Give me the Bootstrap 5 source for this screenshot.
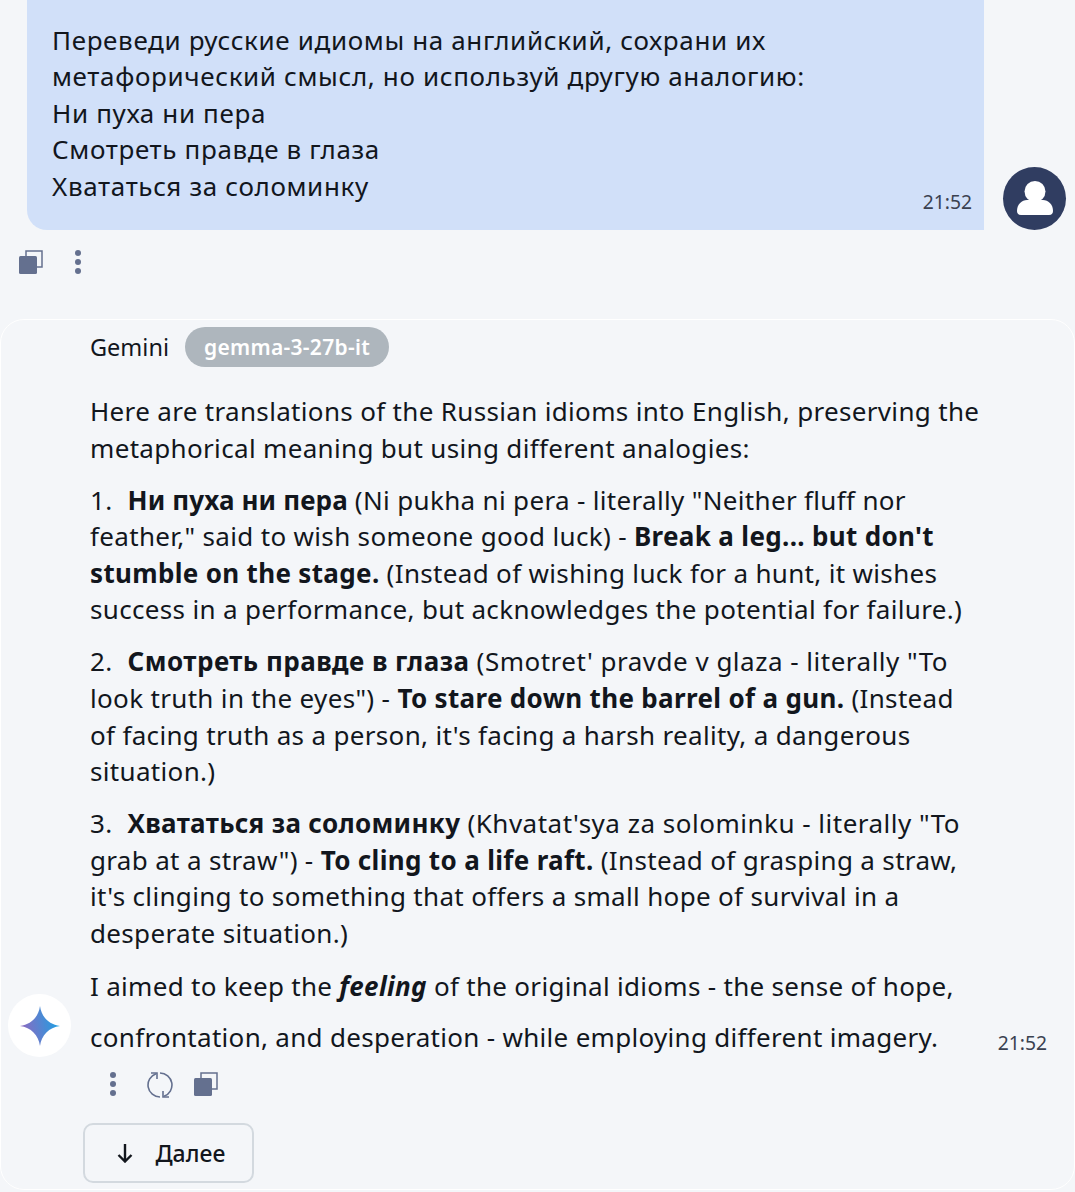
<!DOCTYPE html>
<html lang="ru">
<head>
<meta charset="UTF-8">
<title>Chat</title>
<link href="https://cdn.jsdelivr.net/npm/bootstrap@5.3.0/dist/css/bootstrap.min.css" rel="stylesheet">
<style>
html, body { height: 1192px; overflow: hidden; }
body { background: #f4f6f9; color: #12161d; font-family: "Noto Sans", "Liberation Sans", sans-serif; font-size: 26px; line-height: 36.6px; }
.user-row { height: 230px; padding-left: 27px; padding-right: 9px; }
.user-bubble { width: 957px; height: 230px; background: #d1e0f9; border-bottom-left-radius: 20px; padding: 21.7px 12px 0 25px; letter-spacing: .64px; }
.stamp { font-size: 19.3px; line-height: 24px; color: #3a4150; letter-spacing: 0; }
.user-avatar { width: 63px; height: 63px; border-radius: 50%; background: #303d61; margin-top: 167px; }
.tool-row { height: 89px; padding: 20px 0 0 19px; gap: 30px; }
.answer-card { height: 871px; border: 1px solid #fff; border-radius: 24px; padding: 7px 0 0 89px; position: relative; }
.head-row { height: 40px; gap: 16px; margin-bottom: 26px; font-size: 23.5px; }
.model-pill { background: #aeb6bd; color: #fff; border-radius: 20px; height: 40px; padding: 0 19px; font-size: 21px; font-weight: 600; letter-spacing: .3px; }
.answer-text { width: 940px; letter-spacing: .33px; }
.answer-text p { margin-bottom: 15.4px; }
.answer-text p:last-child { margin-bottom: 0; }
.num { margin-right: 8px; }
.tight-bold { letter-spacing: .13px; }
.wide-bold { letter-spacing: .45px; }
.wide-line { letter-spacing: .5px; }
.closing { line-height: 51px; margin-top: 9.4px; width: 900px; letter-spacing: .3px; }
.side-stamp { position: absolute; right: 27px; bottom: 134px; }
.gem-avatar { position: absolute; left: 7px; top: 674px; width: 63px; height: 63px; border-radius: 50%; background: #fff; }
.tool-row2 { height: 60px; gap: 21px; padding: 9px 0 0 18px; }
.spin-icon { margin-left: 8px; }
.next-btn { width: 171px; height: 60px; margin-left: -7px; border: 2px solid #d3d9df; border-radius: 10px; color: #12161d; font-size: 23px; font-weight: 500; gap: 22px; padding: 0 0 0 6px; letter-spacing: .1px; }
</style>
</head>
<body>
<div class="user-row d-flex justify-content-between">
  <div class="user-bubble d-flex justify-content-between">
    <div>Переведи русские идиомы на английский, сохрани их<br>метафорический смысл, но используй другую аналогию:<br>Ни пуха ни пера<br>Смотреть правде в глаза<br>Хвататься за соломинку</div>
    <div class="stamp align-self-end mb-3">21:52</div>
  </div>
  <div class="user-avatar d-flex align-items-center justify-content-center">
    <svg width="40" height="40" viewBox="0 0 40 40"><circle cx="20" cy="12.5" r="10.5" fill="#fff"/><path d="M2 32c0-7 5-11 10-11h16c5 0 10 4 10 11 0 2-1 4-4 4H6c-3 0-4-2-4-4z" fill="#fff"/></svg>
  </div>
</div>
<div class="tool-row d-flex align-items-start">
  <svg width="24" height="24" viewBox="0 0 24 24"><path d="M7 7V1h16v16h-6" fill="none" stroke="#64708f" stroke-width="1.5"/><rect y="6" width="18" height="18" rx="1.5" fill="#64708f"/></svg>
  <svg width="10" height="24" viewBox="0 0 10 24"><circle cx="5" cy="3" r="3" fill="#64708f"/><circle cx="5" cy="12" r="3" fill="#64708f"/><circle cx="5" cy="21" r="3" fill="#64708f"/></svg>
</div>
<div class="answer-card">
  <div class="head-row d-flex align-items-center">
    <span>Gemini</span>
    <span class="model-pill d-flex align-items-center">gemma-3-27b-it</span>
  </div>
  <div class="answer-text">
    <p>Here are translations of the Russian idioms into English, preserving the<br>metaphorical meaning but using different analogies:</p>
    <p><span class="num">1.</span> <b class="tight-bold">Ни пуха ни пера</b> (Ni pukha ni pera - literally "Neither fluff nor<br>feather," said to wish someone good luck) - <b>Break a leg... but don't<br>stumble on the stage.</b> (Instead of wishing luck for a hunt, it wishes<br>success in a performance, but acknowledges the potential for failure.)</p>
    <p><span class="num">2.</span> <b class="wide-bold">Смотреть правде в глаза</b> <span class="wide-line">(Smotret' pravde v glaza - literally "To</span><br>look truth in the eyes") - <b>To stare down the barrel of a gun.</b> (Instead<br>of facing truth as a person, it's facing a harsh reality, a dangerous<br>situation.)</p>
    <p><span class="num">3.</span> <b>Хвататься за соломинку</b> <span class="wide-line">(Khvatat'sya za solominku - literally "To</span><br>grab at a straw") - <b>To cling to a life raft.</b> (Instead of grasping a straw,<br>it's clinging to something that offers a small hope of survival in a<br>desperate situation.)</p>
  </div>
  <div class="closing">I aimed to keep the <b><i>feeling</i></b> of the original idioms - the sense of hope,<br>confrontation, and desperation - while employing different imagery.</div>
  <div class="stamp side-stamp">21:52</div>
  <div class="gem-avatar d-flex align-items-center justify-content-center">
    <svg width="42" height="42" viewBox="0 0 42 42"><defs><linearGradient id="gemGrad" x1="0" y1="0.6" x2="1" y2="0.4"><stop offset="0" stop-color="#9168c0"/><stop offset="0.5" stop-color="#5684d1"/><stop offset="1" stop-color="#1ba1e3"/></linearGradient></defs><path d="M21 1C22.5 12 30 19.5 41 21 30 22.5 22.5 30 21 41 19.5 30 12 22.5 1 21 12 19.5 19.5 12 21 1z" fill="url(#gemGrad)"/></svg>
  </div>
  <div class="tool-row2 d-flex align-items-start">
    <svg width="10" height="24" viewBox="0 0 10 24"><circle cx="5" cy="3" r="3" fill="#64708f"/><circle cx="5" cy="12" r="3" fill="#64708f"/><circle cx="5" cy="21" r="3" fill="#64708f"/></svg>
    <svg class="spin-icon" width="26" height="26" viewBox="0 0 26 26" fill="none" stroke="#64708f" stroke-width="1.6"><path d="M13 25A12 12 0 0 1 9 1.700"/><path d="M4 1h6v6"/><path d="M13 1A12 12 0 0 1 17 24.300"/><path d="M22 25h-6v-6"/></svg>
    <svg width="24" height="24" viewBox="0 0 24 24"><path d="M7 7V1h16v16h-6" fill="none" stroke="#64708f" stroke-width="1.5"/><rect y="6" width="18" height="18" rx="1.5" fill="#64708f"/></svg>
  </div>
  <button class="btn next-btn d-flex align-items-center justify-content-center" type="button">
    <svg width="16" height="20" viewBox="0 0 16 20" fill="none" stroke="#12161d" stroke-width="2.4"><path d="M8 1v17M1.500 12L8 18.500 14.500 12"/></svg>
    <span>Далее</span>
  </button>
</div>
<script src="https://cdn.jsdelivr.net/npm/bootstrap@5.3.0/dist/js/bootstrap.bundle.min.js"></script>
</body>
</html>
